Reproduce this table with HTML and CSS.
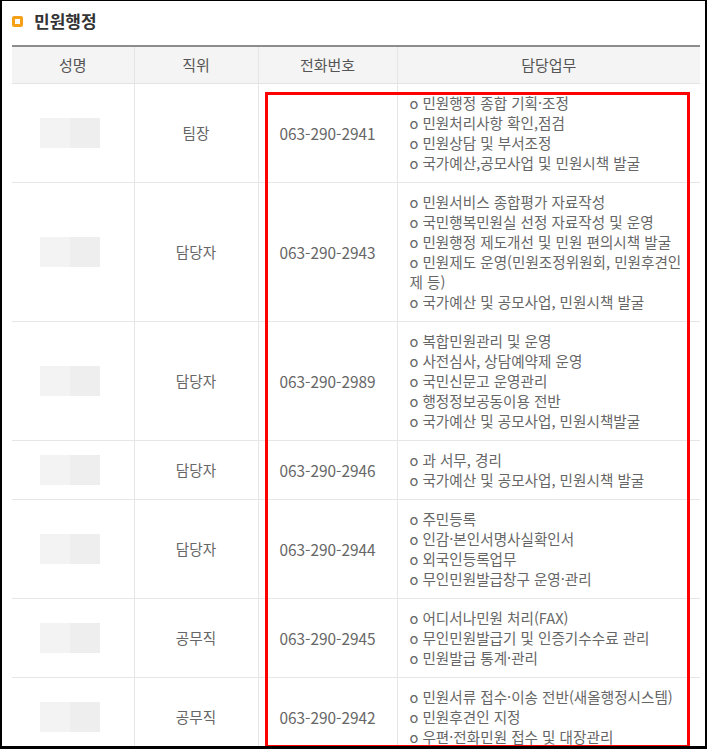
FILE: index.html
```
<!DOCTYPE html>
<html lang="ko">
<head>
    <meta charset="UTF-8">
    <meta name="viewport" content="width=device-width, initial-scale=1.0">
    <title>민원행정</title>
    <link rel="stylesheet" href="styles.css">
</head>
<body>
    <div class="frame">
        <h2 class="section-title"><span class="title-icon"></span>민원행정</h2>

        <table class="staff-table">
            <colgroup>
                <col class="col-name">
                <col class="col-rank">
                <col class="col-tel">
                <col class="col-work">
            </colgroup>
            <thead>
                <tr>
                    <th>성명</th>
                    <th>직위</th>
                    <th>전화번호</th>
                    <th>담당업무</th>
                </tr>
            </thead>
            <tbody>
                <tr>
                    <td class="name"><span class="blur"></span></td>
                    <td class="center">팀장</td>
                    <td class="center tel">063-290-2941</td>
                    <td class="work">
                        <p>o 민원행정 종합 기획·조정</p>
                        <p>o 민원처리사항 확인,점검</p>
                        <p>o 민원상담 및 부서조정</p>
                        <p>o 국가예산,공모사업 및 민원시책 발굴</p>
                    </td>
                </tr>
                <tr>
                    <td class="name"><span class="blur"></span></td>
                    <td class="center">담당자</td>
                    <td class="center tel">063-290-2943</td>
                    <td class="work">
                        <p>o 민원서비스 종합평가 자료작성</p>
                        <p>o 국민행복민원실 선정 자료작성 및 운영</p>
                        <p>o 민원행정 제도개선 및 민원 편의시책 발굴</p>
                        <p>o 민원제도 운영(민원조정위원회, 민원후견인제 등)</p>
                        <p>o 국가예산 및 공모사업, 민원시책 발굴</p>
                    </td>
                </tr>
                <tr>
                    <td class="name"><span class="blur"></span></td>
                    <td class="center">담당자</td>
                    <td class="center tel">063-290-2989</td>
                    <td class="work">
                        <p>o 복합민원관리 및 운영</p>
                        <p>o 사전심사, 상담예약제 운영</p>
                        <p>o 국민신문고 운영관리</p>
                        <p>o 행정정보공동이용 전반</p>
                        <p>o 국가예산 및 공모사업, 민원시책발굴</p>
                    </td>
                </tr>
                <tr>
                    <td class="name"><span class="blur"></span></td>
                    <td class="center">담당자</td>
                    <td class="center tel">063-290-2946</td>
                    <td class="work">
                        <p>o 과 서무, 경리</p>
                        <p>o 국가예산 및 공모사업, 민원시책 발굴</p>
                    </td>
                </tr>
                <tr>
                    <td class="name"><span class="blur"></span></td>
                    <td class="center">담당자</td>
                    <td class="center tel">063-290-2944</td>
                    <td class="work">
                        <p>o 주민등록</p>
                        <p>o 인감·본인서명사실확인서</p>
                        <p>o 외국인등록업무</p>
                        <p>o 무인민원발급창구 운영·관리</p>
                    </td>
                </tr>
                <tr>
                    <td class="name"><span class="blur"></span></td>
                    <td class="center">공무직</td>
                    <td class="center tel">063-290-2945</td>
                    <td class="work">
                        <p>o 어디서나민원 처리(FAX)</p>
                        <p>o 무인민원발급기 및 인증기수수료 관리</p>
                        <p>o 민원발급 통계·관리</p>
                    </td>
                </tr>
                <tr>
                    <td class="name"><span class="blur"></span></td>
                    <td class="center">공무직</td>
                    <td class="center tel">063-290-2942</td>
                    <td class="work">
                        <p>o 민원서류 접수·이송 전반(새올행정시스템)</p>
                        <p>o 민원후견인 지정</p>
                        <p>o 우편·전화민원 접수 및 대장관리</p>
                    </td>
                </tr>
            </tbody>
        </table>

        <!-- red box drawn over the duty columns -->
        <div class="highlight"></div>
    </div>
</body>
</html>
```

FILE: styles.css
```
* {
    box-sizing: border-box;
}
body {
    margin: 0;
    background-color: #fff;
    font-family: "Noto Sans CJK KR", "Noto Sans", sans-serif;
    color: #666;
}
.frame {
    position: relative;
    width: 707px;
    height: 749px;
    overflow: hidden;
    border-top: 1px solid #000;
    border-left: 2px solid #000;
    border-right: 2px solid #000;
    border-bottom: 3px solid #000;
    background-color: #fff;
}
.section-title {
    margin: 0 0 13px 0;
    padding: 9px 0 0 10px;
    font-size: 17px;
    line-height: 22px;
    font-weight: bold;
    color: #333;
    display: flex;
    align-items: center;
}
.title-icon {
    width: 11px;
    height: 11px;
    border: 3px solid #f6a01a;
    border-radius: 2px;
    margin-right: 11px;
}
.staff-table {
    margin-left: 10px;
    width: 688px;
    border-collapse: collapse;
    table-layout: fixed;
    border-top: 2px solid #8c8c8c;
    font-size: 14.6px;
    line-height: 20px;
}
.col-name { width: 122px; }
.col-rank { width: 124px; }
.col-tel { width: 139px; }
.col-work { width: 303px; }
.staff-table th {
    background-color: #f4f4f4;
    color: #555;
    font-size: 15px;
    font-weight: normal;
    padding: 8px 0;
    border-bottom: 1px solid #e4e4e4;
    border-left: 1px solid #e4e4e4;
}
.staff-table td {
    padding: 9px 0;
    border-bottom: 1px solid #e6e6e6;
    border-left: 1px solid #e6e6e6;
    vertical-align: middle;
}
.staff-table th:first-child,
.staff-table td:first-child {
    border-left: none;
}
.center {
    text-align: center;
}
.tel {
    font-size: 15.4px;
}
.name {
    padding-left: 28px !important;
}
.blur {
    display: block;
    width: 60px;
    height: 30px;
    background: linear-gradient(to right, #f3f3f3 50%, #eeeeee 50%);
}
.work {
    padding: 9px 10px 9px 12px !important;
}
.work p {
    margin: 0;
}
.highlight {
    position: absolute;
    left: 263px;
    top: 91px;
    width: 425px;
    height: 656px;
    border: 3px solid #ff0000;
}
```
